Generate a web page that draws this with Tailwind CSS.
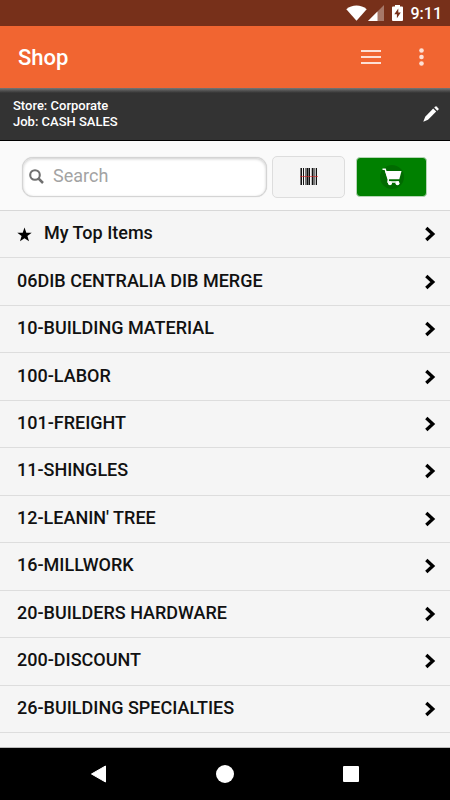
<!DOCTYPE html>
<html lang="en">
<head>
<meta charset="utf-8">
<meta name="viewport" content="width=device-width, initial-scale=1">
<title>Shop</title>
<script src="https://cdn.jsdelivr.net/npm/@tailwindcss/browser@4"></script>
</head>
<body class="flex min-h-screen flex-col bg-[#f5f5f5] font-['Roboto',sans-serif] text-[#111]">
<svg class="hidden" aria-hidden="true">
  <symbol id="chevron" viewBox="0 0 12 16"><path d="M1.300 2 7.800 8 1.300 14" fill="none" stroke="#000" stroke-width="3.300"/></symbol>
</svg>

<div class="flex h-[26px] shrink-0 items-center justify-end bg-[#77301a] pr-2 text-white">
  <svg class="mr-px h-4 w-[21px]" viewBox="0 0 21 16"><path d="M.3 4.200C6-.7 15-.7 20.700 4.200L10.500 15.700Z" fill="#fff"/></svg>
  <svg class="mr-2 h-4 w-4" viewBox="0 0 16 16"><path d="M16 0V16H0Z" fill="#fff" fill-opacity=".35"/><path d="M9.500 6.500V16H0Z" fill="#fff"/></svg>
  <svg class="mr-2 h-4 w-[11px]" viewBox="0 0 11 16"><path d="M3 0h5v1.500h2q1 0 1 1V15q0 1-1 1H1q-1 0-1-1V2.500q0-1 1-1h2Z" fill="#fff"/><path d="M6.300 3.500 2.300 9.200h2.600v4L8.800 7.600H6.300Z" fill="#77301a"/></svg>
  <span class="pt-[2px] text-base leading-6 font-medium">9:11</span>
</div>

<header class="flex h-[62px] shrink-0 items-center bg-[#f16531] pr-[13px] pl-[18px] text-white">
  <h1 class="grow pt-[2px] text-[22px] leading-7 font-medium">Shop</h1>
  <button class="flex h-8 w-8 items-center justify-center" aria-label="Menu">
    <svg class="h-[14px] w-5" viewBox="0 0 20 14"><path d="M0 1h20M0 7h20M0 13h20" stroke="#fde0d6" stroke-width="2"/></svg>
  </button>
  <button class="ml-[18px] flex h-8 w-8 items-center justify-center" aria-label="More options">
    <svg class="h-[18px] w-[6px]" viewBox="0 0 6 18" fill="#fde0d6"><circle cx="3.500" cy="2.500" r="2.300"/><circle cx="3.500" cy="9" r="2.300"/><circle cx="3.500" cy="15.500" r="2.300"/></svg>
  </button>
</header>

<section class="flex h-[53px] shrink-0 items-center border-b border-black bg-[#333] bg-linear-to-b from-[#777] from-0% to-[#333] to-[5px] pr-[11px] pl-[13px] text-white">
  <p class="grow pb-px text-[13px] leading-4 font-medium">Store: Corporate<br>Job: CASH SALES</p>
  <button aria-label="Edit store and job">
    <svg class="h-4 w-4" viewBox="0 0 16 16"><path d="M10.200 2.600 13.200 5.600 5 13.800.300 15.700 2.200 10.800Z" fill="#fff"/><path d="M11.200 1.600 12.500.500q.500-.400 1 0l2 2q.400.500 0 1L14.300 4.700Z" fill="#fff"/></svg>
  </button>
</section>

<form class="flex h-[70px] shrink-0 items-center border-b border-[#d8d8d8] bg-[#fafafa] pt-[2px] pr-[23px] pl-[22px]" onsubmit="return false">
  <div class="flex h-10 min-w-0 grow items-center rounded-[11px] border border-[#d4d4d4] bg-white pl-[6px] shadow-[inset_0_1px_3px_#0003,0_0_1px_#0003]">
    <label for="search" aria-label="Search"><svg class="h-[15px] w-[15px] shrink-0" viewBox="0 0 15 15" fill="none" stroke="#6f6f6f"><circle cx="6" cy="6" r="4.800" stroke-width="2.100"/><path d="m9.500 9.500 4.500 4.500" stroke-width="2.500"/></svg></label>
    <input id="search" type="text" placeholder="Search" aria-label="Search" class="ml-[9px] h-9 w-full min-w-0 bg-transparent pb-[2px] text-[18px] leading-6 outline-none placeholder:text-[#a3a3a3]">
  </div>
  <button type="button" class="ml-[5px] flex h-[42px] w-[73px] shrink-0 items-center justify-center rounded-[5px] border border-[#ddd] bg-[#f5f5f5]" aria-label="Scan barcode">
    <svg class="h-[17px] w-[18px]" viewBox="0 0 18 17"><path d="M1.500 0v17M3.500 0v17M7.500 0v17M9.500 0v17M12.500 0v17M16.500 0v17" stroke="#111"/><path d="M.500 0v17M5.500 0v17M6.500 0v17M8.500 0v17M13.500 0v17M14.500 0v17" stroke="#777"/><path d="M11.500 0v17M15.500 0v17" stroke="#bbb"/><path d="M0 8.500h18" stroke="#d22" stroke-opacity=".6"/></svg>
  </button>
  <button type="button" class="ml-[11px] flex h-10 w-[71px] shrink-0 items-center justify-center rounded-[4px] border border-[#b5d5b5] bg-[#008000]" aria-label="Cart">
    <svg class="h-6 w-6" viewBox="0 0 24 24"><circle cx="12" cy="12" r="12" fill="#006b00"/><path d="M5 6h16.500L19.300 14.300H8Z" fill="#fff"/><path d="M2.500 4.200h2.700L8.300 14.500 8 17H19" fill="none" stroke="#fff" stroke-width="1.500"/><circle cx="10" cy="18.200" r="2" fill="#fff"/><circle cx="17.500" cy="18.200" r="2" fill="#fff"/></svg>
  </button>
</form>

<main class="flex grow flex-col border-b border-[#bbb] pb-[14px]">
  <ul class="flex grow flex-col text-[18px] leading-6 font-medium">
    <li class="flex flex-1 border-b border-[#ddd]"><a href="#" class="flex min-h-[46px] grow items-center pr-[13px] pl-[17px]"><svg class="mr-3 h-[15px] w-[15px]" viewBox="0 0 15 15"><path d="M7.500.500 9.300 5.700H14.700L10.400 9 12 14.300 7.500 11.200 3 14.300 4.600 9 .300 5.700H5.700Z"/></svg><span class="grow pb-[2px]">My Top Items</span><svg class="h-4 w-3"><use href="#chevron"/></svg></a></li>
    <li class="flex flex-1 border-b border-[#ddd]"><a href="#" class="flex min-h-[46px] grow items-center pr-[13px] pl-[17px]"><span class="grow pb-[2px]">06DIB CENTRALIA DIB MERGE</span><svg class="h-4 w-3"><use href="#chevron"/></svg></a></li>
    <li class="flex flex-1 border-b border-[#ddd]"><a href="#" class="flex min-h-[46px] grow items-center pr-[13px] pl-[17px]"><span class="grow pb-[2px]">10-BUILDING MATERIAL</span><svg class="h-4 w-3"><use href="#chevron"/></svg></a></li>
    <li class="flex flex-1 border-b border-[#ddd]"><a href="#" class="flex min-h-[46px] grow items-center pr-[13px] pl-[17px]"><span class="grow pb-[2px]">100-LABOR</span><svg class="h-4 w-3"><use href="#chevron"/></svg></a></li>
    <li class="flex flex-1 border-b border-[#ddd]"><a href="#" class="flex min-h-[46px] grow items-center pr-[13px] pl-[17px]"><span class="grow pb-[2px]">101-FREIGHT</span><svg class="h-4 w-3"><use href="#chevron"/></svg></a></li>
    <li class="flex flex-1 border-b border-[#ddd]"><a href="#" class="flex min-h-[46px] grow items-center pr-[13px] pl-[17px]"><span class="grow pb-[2px]">11-SHINGLES</span><svg class="h-4 w-3"><use href="#chevron"/></svg></a></li>
    <li class="flex flex-1 border-b border-[#ddd]"><a href="#" class="flex min-h-[46px] grow items-center pr-[13px] pl-[17px]"><span class="grow pb-[2px]">12-LEANIN' TREE</span><svg class="h-4 w-3"><use href="#chevron"/></svg></a></li>
    <li class="flex flex-1 border-b border-[#ddd]"><a href="#" class="flex min-h-[46px] grow items-center pr-[13px] pl-[17px]"><span class="grow pb-[2px]">16-MILLWORK</span><svg class="h-4 w-3"><use href="#chevron"/></svg></a></li>
    <li class="flex flex-1 border-b border-[#ddd]"><a href="#" class="flex min-h-[46px] grow items-center pr-[13px] pl-[17px]"><span class="grow pb-[2px]">20-BUILDERS HARDWARE</span><svg class="h-4 w-3"><use href="#chevron"/></svg></a></li>
    <li class="flex flex-1 border-b border-[#ddd]"><a href="#" class="flex min-h-[46px] grow items-center pr-[13px] pl-[17px]"><span class="grow pb-[2px]">200-DISCOUNT</span><svg class="h-4 w-3"><use href="#chevron"/></svg></a></li>
    <li class="flex flex-1 border-b border-[#ddd]"><a href="#" class="flex min-h-[46px] grow items-center pr-[13px] pl-[17px]"><span class="grow pb-[2px]">26-BUILDING SPECIALTIES</span><svg class="h-4 w-3"><use href="#chevron"/></svg></a></li>
  </ul>
</main>

<nav class="flex h-[52px] shrink-0 items-center justify-center gap-[94px] bg-black" aria-label="System">
  <button class="flex h-8 w-8 items-center justify-center" aria-label="Back"><svg class="h-[18px] w-4" viewBox="0 0 16 18"><path d="M14.500 1V17L.500 9Z" fill="#fff" stroke="#fff" stroke-linejoin="round"/></svg></button>
  <button class="flex h-8 w-8 items-center justify-center" aria-label="Home"><span class="h-[18px] w-[18px] rounded-full bg-white"></span></button>
  <button class="flex h-8 w-8 items-center justify-center" aria-label="Recent apps"><span class="h-4 w-4 rounded-[1px] bg-white"></span></button>
</nav>
</body>
</html>
